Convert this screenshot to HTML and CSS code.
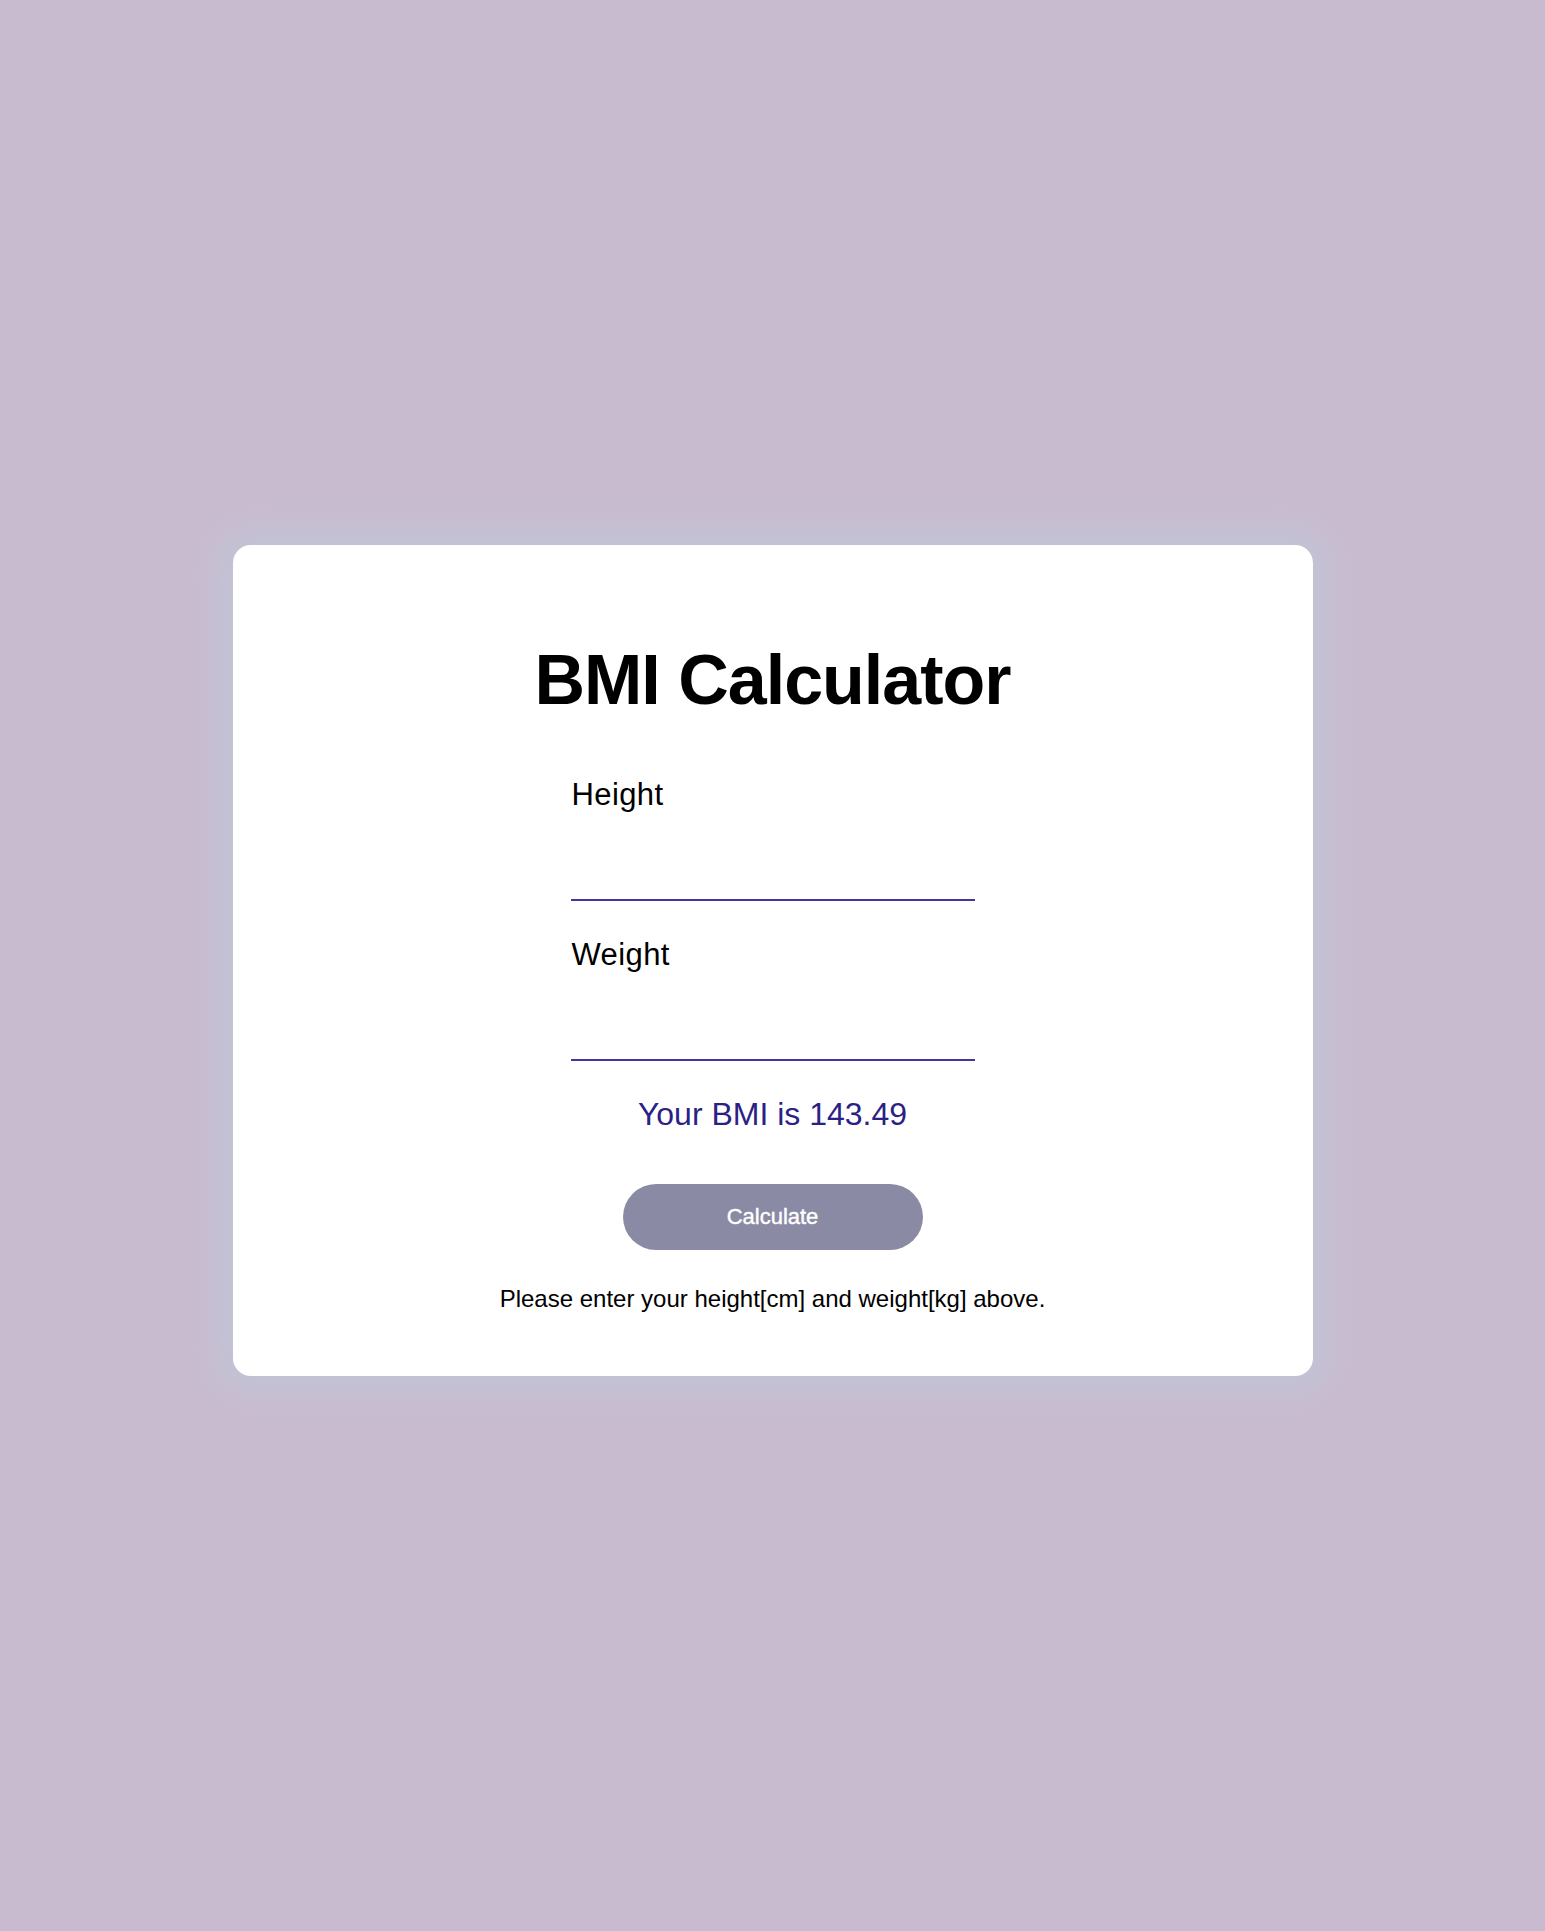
FILE: index.html
```html
<!DOCTYPE html>
<html lang="en">
<head>
<meta charset="utf-8">
<title>BMI Calculator</title>
<link rel="stylesheet" href="styles.css">
</head>
<body>
  <main class="card">
    <h1 class="title">BMI Calculator</h1>
    <form class="form">
      <div class="field">
        <label class="label" for="height">Height</label>
        <input class="input" id="height" type="text">
      </div>
      <div class="field">
        <label class="label" for="weight">Weight</label>
        <input class="input" id="weight" type="text">
      </div>
    </form>
    <p class="result">Your BMI is 143.49</p>
    <button class="btn" type="button">Calculate</button>
    <p class="hint">Please enter your height[cm] and weight[kg] above.</p>
  </main>
</body>
</html>
```
FILE: styles.css
```css
html, body {
  margin: 0;
  padding: 0;
}
body {
  min-height: 1931px;
  background: #c8bbcf;
  font-family: "Liberation Sans", Arial, Helvetica, sans-serif;
  display: flex;
  align-items: center;
  justify-content: center;
  color: #000;
}
.card {
  width: 1080px;
  box-sizing: border-box;
  margin-top: -10px;
  background: #fff;
  border-radius: 18px;
  padding: 95px 0 63px;
  display: flex;
  flex-direction: column;
  align-items: center;
  box-shadow: 0 0 34px 12px #c1c5d7;
}
.title {
  margin: 0;
  font-size: 70px;
  line-height: 80px;
  font-weight: bold;
  letter-spacing: -1px;
}
.form {
  width: 404px;
  margin-top: 57px;
  display: flex;
  flex-direction: column;
  gap: 36px;
}
.field {
  display: flex;
  flex-direction: column;
}
.label {
  font-size: 31px;
  line-height: 36px;
  letter-spacing: 0.4px;
  padding-left: 1px;
}
.input {
  margin-top: 38px;
  height: 50px;
  box-sizing: border-box;
  border: none;
  border-bottom: 2px solid #433896;
  outline: none;
  background: transparent;
  font: inherit;
  font-size: 28px;
}
.result {
  margin: 34px 0 0;
  font-size: 32px;
  line-height: 38px;
  color: #2c1f86;
}
.btn {
  margin-top: 51px;
  width: 300px;
  height: 66px;
  border: none;
  border-radius: 33px;
  background: #8a8aa4;
  color: #fff;
  font-family: inherit;
  font-size: 22px;
  font-weight: normal;
  -webkit-text-stroke: 0.4px #fff;
}
.hint {
  margin: 35px 0 0;
  font-size: 24px;
  line-height: 28px;
}
```
